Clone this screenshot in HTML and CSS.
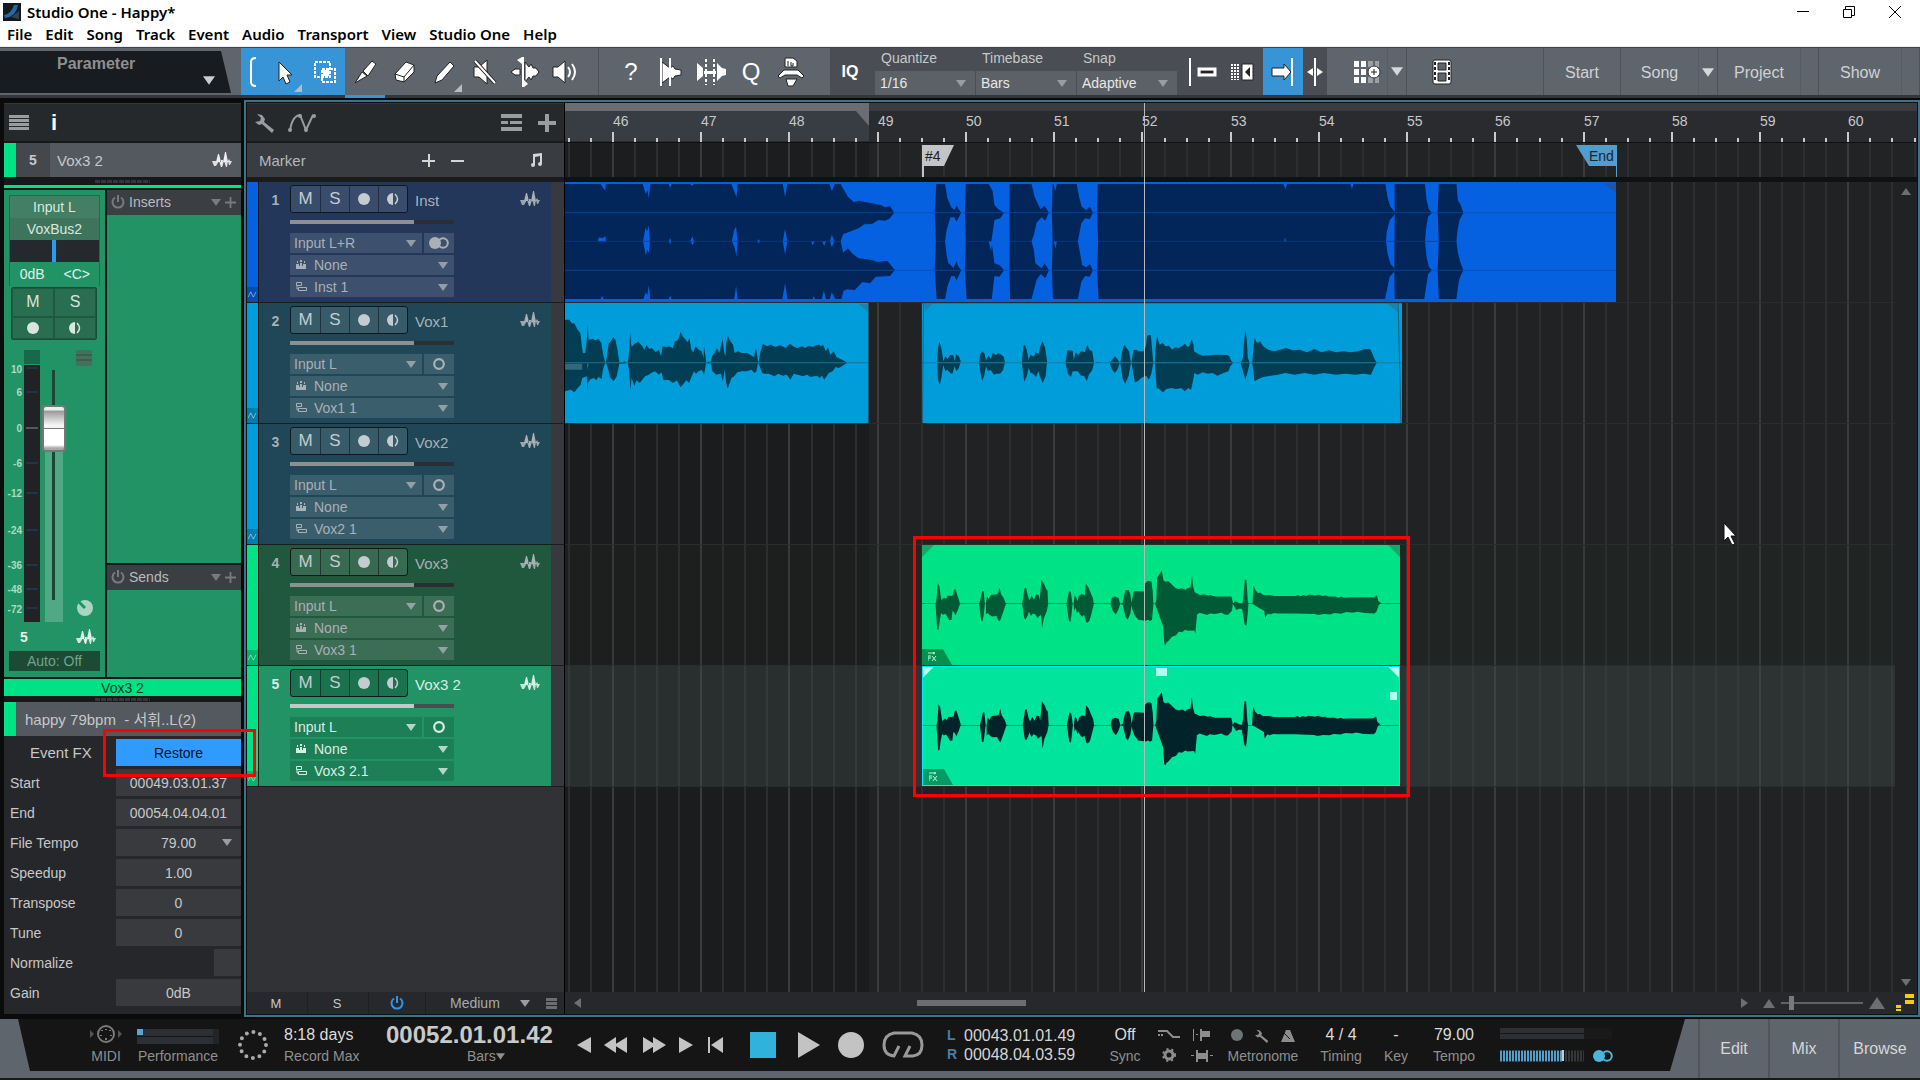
FILE: index.html
```html
<!DOCTYPE html>
<html lang="en">
<head>
  <meta charset="UTF-8" />
  <meta name="viewport" content="width=device-width, initial-scale=1.0" />
  <title>Studio One - Happy*</title>
  <link rel="stylesheet" href="styles.css">
</head>
<body>

  <!-- shared icons -->
  <svg class="sprite" width="0" height="0">
    <symbol id="i-wave" viewBox="0 0 20 16"><path d="M0 9h4l3 1h6l4-1h3l-2 4h-1l-1-4-1 6h-1l-2-6-2 6H9L7 9l-3 5H2z" fill="currentColor" opacity=".9"/><path d="M4 10l2-8h1l2 8zM11 10l2-10h1l2 10zM8 8l1 7h1l1-7zM16 9l1-2 1 2z" fill="currentColor"/></symbol>
    <symbol id="i-down" viewBox="0 0 10 7"><path d="M0 0h10L5 7z" fill="currentColor"/></symbol>
    <symbol id="i-rec" viewBox="0 0 12 12"><circle cx="6" cy="6" r="6" fill="currentColor"/></symbol>
    <symbol id="i-mon" viewBox="0 0 12 12"><path d="M6 0v12A6 6 0 0 1 6 0z" fill="currentColor"/><path d="M8 1q5 5 0 10" fill="none" stroke="currentColor" stroke-width="1.5"/></symbol>
    <symbol id="i-mono" viewBox="0 0 20 12"><circle cx="10" cy="6" r="4.8" fill="none" stroke="currentColor" stroke-width="2.2"/></symbol>
    <symbol id="i-stereo" viewBox="0 0 20 12"><circle cx="6" cy="6" r="6" fill="currentColor"/><circle cx="14" cy="6" r="4.8" fill="none" stroke="currentColor" stroke-width="2"/></symbol>
    <symbol id="i-inst" viewBox="0 0 10 10"><path d="M0 4h3v5H0zM4 3h2v6H4zM7 4h3v5H7zM4 0h2v2H4zM1 1h1v2H1zM8 1h1v2H8zM3 6h1v3H3zM6 6h1v3H6z" fill="currentColor"/></symbol>
    <symbol id="i-layer" viewBox="0 0 11 10"><path d="M.5.5h5v3h-5zM2.500 5.500h8v3h-8z" fill="none" stroke="currentColor" stroke-width="1"/><path d="M1 4v3h2" fill="none" stroke="currentColor"/></symbol>
    <symbol id="i-auto" viewBox="0 0 10 8"><path d="M0 7l3-6 3 6 3-6" fill="none" stroke="currentColor"/></symbol>
    <symbol id="i-power" viewBox="0 0 14 14"><path d="M4 2.500a5.500 5.500 0 1 0 6 0M7 0v7" fill="none" stroke="currentColor" stroke-width="2"/></symbol>
    <symbol id="i-plus" viewBox="0 0 12 12"><path d="M5 0h2v5h5v2H7v5H5V7H0V5h5z" fill="currentColor"/></symbol>
    <symbol id="i-wrench" viewBox="0 0 20 20"><path d="M2 1l5 1 3 4-1 3 10 8-2 3L7 11l-3 1-4-3 5-1 1-3z" fill="currentColor"/></symbol>
    <symbol id="i-lines" viewBox="0 0 20 15"><path d="M0 0h20v3H0zM0 4h20v3H0zM0 8h20v3H0zM0 12h20v3H0z" fill="currentColor"/></symbol>
    <symbol id="i-fx" viewBox="0 0 9 10"><path d="M0 1h6M5 0l2 1-2 1M0 4h3M0 4v5M0 6h3M4 4l4 5M8 4L4 9" fill="none" stroke="currentColor" stroke-width="1"/></symbol>
    <symbol id="vox3" viewBox="65 78 1413 358" preserveAspectRatio="none">
      <path fill="currentColor" d="M105 254l3-15 3-47 5 8 6 42 8-7 6 3 5-9 9 1 6-2 3-16 5-3 6 20 5 15 2 10-6 18-7 16-5-10-4-3-3 27h-7l-8-15-4-4-6 3-5-5-4 18-4 31-4 1-3-45z
        M234 254l5-20 4-19h4l4 39-4 35-3 17-4-1-4-33zM254 254l3-23 5 7 7-11 17-2 4-3 4-17 5 20 8 12 6 17-8 24-10 28-5-4-5-12-13 1-7-4-6-6-5 4z
        M361 254l4-26 3-21 5-1 5 25 5 12 6-14 7 12 6-15 8 1 3 14 5-59 8 12 6 15 4 5 2 40-4 21-9 22-5 29-3-39-5 3-6 6-5-10-8-4-6 8-6-13-4 12-6 12-4-5z
        M492 254l5-25 3-14 5 4 5 35-3 30-3 24-5-4-4-30zM513 254l3-25 4 4 5 13 3-15 8-6 11 2 2-34 8 12 7 17 6 14 3 18-8 32-5 18-6 6-4-2-6-22-5 5-6-4-6-11-4 5-4-16-4 9z
        M622 254l4-18 10-4 10 4 5 18-6 18-7 13-9-10zM652 254l6-3 4-22 5-16 9-1 5 13 4 29-4 28-8 19-6-8-5-21-3-15zM684 254l6-35 4-4 28 2 3-26 5-4 4-2 9 2 4 30 2 37-4 47-6 4-6-4-7 3-22-3-10-13-7-17z
        M754 254l4-14 2-65 10-15 4-5 5 29 6 4 8-2 10 9 12 12 9 2 11-2 9 5 5-5 10-3 4-35 4 34 4 16 16 8 12-2 12 4 5-2 16 5h48l4 18 0 4-3 20-11 12-8 0-12-6-20 4-14-2-8 5-22-7-8 5-5 58-3-10-20 1-7-3-9 7-10-1-8 10-12 5-10 12-6 5-4 8-3-5-3-50z
        M984 254l6-8 6 2 6 4 10 2 3-20 4-52h5l4 60 2 12-2 28-4 38-5-5-5-31-3-16-9 0-8 4z
        M1042 254l3-57 6 16 8 9 5-2 10 7 20 0 12 3 63 0 8-3 6 4 10-4 7 3 10-4 18 3 10-3 10 4 12-1 5 3h22l8 3 10-3 7 3 20-1h68l10-6 4 17 8 7-7 6-6 18-6 6-30-1-22-4-12 3-20-2-15 5-20-2-12 4-20-1-16 3-10-3-60-2h-50l-10-1-12 4-6-3-9 13-2-20z"/>
    </symbol>
  </svg>

  <header class="titlebar">
    <svg width="18" height="18"><rect width="18" height="18" fill="#151a20"/><path d="M1 12q7-1 10-10h4q-2 12-13 13z" fill="#1f6ba8"/><path d="M8 14l8-6v8z" fill="#37424d"/></svg>
    <span class="title">Studio One - Happy*</span>
    <button aria-label="Minimize"><svg width="12" height="12"><path d="M0 5.500h12" stroke="#000"/></svg></button>
    <button aria-label="Restore"><svg width="12" height="12"><path d="M.5 3.500h8v8h-8zM2.500 3.500v-3h9v9h-3" fill="none" stroke="#000"/></svg></button>
    <button aria-label="Close"><svg width="12" height="12"><path d="M0 0l12 12M12 0L0 12" stroke="#000"/></svg></button>
  </header>

  <nav class="menubar">
    <a href="#">File</a><a href="#">Edit</a><a href="#">Song</a><a href="#">Track</a><a href="#">Event</a><a href="#">Audio</a><a href="#">Transport</a><a href="#">View</a><a href="#">Studio One</a><a href="#">Help</a>
  </nav>

  <div class="toolbar">
    <div class="parameter"><span>Parameter</span><svg width="12" height="9"><use href="#i-down"/></svg></div>

    <div class="tools">
      <button class="active narrow" aria-label="Tool bracket"><svg width="10" height="30" fill="none" stroke="#fff" stroke-width="2"><path d="M8 1Q3 1 3 5v20q0 4 5 4"/></svg></button>
      <button class="active" aria-label="Arrow tool"><svg width="40" height="48"><path d="M14 14v19l4-4 3 7 4-2-3-7h5z" fill="#fff" stroke="#222" stroke-width="1"/><path d="M37 36v8h-8z" fill="#b5bcc4"/></svg></button>
      <button class="active" aria-label="Range tool"><svg width="24" height="24" fill="none" stroke="#fff" stroke-width="2"><path d="M2 2h15v15H2zM9 9h13v13H9z" stroke-dasharray="3 1"/><path d="M11 11h4v4h-4z" fill="#fff"/></svg></button>
      <button class="marked" aria-label="Split tool"><svg width="24" height="26"><path d="M2 24L9 13l5 4zM10 12L19 2l4 3-8 12z" fill="#fff" stroke="#222"/></svg></button>
      <button aria-label="Eraser tool"><svg width="24" height="24"><path d="M2 14L13 2l8 3v7L11 22l-8-2z" fill="#fff" stroke="#222"/><path d="M2 14l9 3 10-12M11 17v5" stroke="#222" fill="none"/></svg></button>
      <button aria-label="Paint tool"><svg width="40" height="48"><path d="M10 35l2-7 13-14 4 4-12 14z" fill="#fff" stroke="#222"/><path d="M37 36v8h-8z" fill="#b5bcc4"/></svg></button>
      <button aria-label="Mute tool"><svg width="26" height="26"><path d="M2 8h5l8-7v24l-8-7H2z" fill="#fff" stroke="#222"/><path d="M3 2l20 22" stroke="#222" stroke-width="4"/><path d="M3 2l20 22" stroke="#fff" stroke-width="2"/></svg></button>
      <button aria-label="Bend tool"><svg width="30" height="30"><path d="M1 15l4-3 5 0v6l-5 0zM15 5l4 5 2-3 2 4 3 0 3 4-3 4-3 0-2 4-2-3-4 5z" fill="#fff" stroke="#222" stroke-width="1"/><path d="M13 0v30" stroke="#fff" stroke-width="2"/><path d="M12 0v7L7 3zM14 30v-7l4 4z" fill="#fff"/></svg></button>
      <button aria-label="Listen tool"><svg width="26" height="26"><path d="M1 8h5l7-6v22l-7-6H1z" fill="#fff" stroke="#222"/><path d="M16 8q4 5 0 10M20 5q6 8 0 16" fill="none" stroke="#fff" stroke-width="2"/></svg></button>
    </div>

    <div class="tools actions">
      <button class="glyph" aria-label="Help">?</button>
      <button aria-label="Strip silence"><svg width="24" height="28"><path d="M3 4l8 6 3-2 2 3 6 1v5l-6 1-2 3-3-2-8 6z" fill="#fff" stroke="#222"/><path d="M2 0v28M11 0v28" stroke="#fff" stroke-width="2"/></svg></button>
      <button aria-label="Bend marker"><svg width="30" height="26"><path d="M1 4l6 5v8l-6 5zM8 12h12v3H8zM21 4l5 5 4 1v6l-4 1-5 5z" fill="#fff"/><path d="M10 0v26M18 0v26" stroke="#fff" stroke-width="2" stroke-dasharray="3 2"/></svg></button>
      <button class="glyph" aria-label="Quantize now">Q</button>
      <button aria-label="Macro"><svg width="28" height="30" fill="#fff" stroke="#222"><path d="M8 1h8l4 3v6H8zM1 19l6-6h14l6 6-2 2-5-3H8l-5 3zM9 22h11l-4 7h-5z"/><path d="M11 4v5M14 5v4h2V6" fill="none"/></svg></button>
    </div>

    <div class="snapbar">
      <button class="iq">IQ</button>
      <div class="field"><label for="quantize">Quantize</label><div class="select"><select id="quantize"><option>1/16</option></select><svg width="10" height="7"><use href="#i-down"/></svg></div></div>
      <div class="field"><label for="timebase">Timebase</label><div class="select"><select id="timebase"><option>Bars</option></select><svg width="10" height="7"><use href="#i-down"/></svg></div></div>
      <div class="field"><label for="snap">Snap</label><div class="select"><select id="snap"><option>Adaptive</option></select><svg width="10" height="7"><use href="#i-down"/></svg></div></div>
      <button class="first" aria-label="Snap to cursor"><svg width="30" height="30"><path d="M2 1v28" stroke="#fff" stroke-width="2"/><path d="M11 12h16v6H11z" fill="none" stroke="#fff" stroke-width="3"/><path d="M13 14h12v2H13z" fill="#222"/></svg></button>
      <button aria-label="Snap to grid"><svg width="24" height="18"><path d="M1 1v16M4 1v16M7 1v16" stroke="#fff" stroke-width="2" stroke-dasharray="2 1"/><path d="M11 1h11v16H11z" fill="#fff" stroke="#222"/><path d="M19 4v10l-5-5z" fill="#222"/></svg></button>
      <button class="active" aria-label="Autoscroll"><svg width="24" height="30"><path d="M1 11h12V7l7 8-7 8v-4H1z" fill="#fff" stroke="#222"/><path d="M21 1v28" stroke="#fff" stroke-width="2"/></svg></button>
      <button class="narrow" aria-label="Cursor follows edit"><svg width="16" height="30"><path d="M8 1v28" stroke="#fff" stroke-width="2"/><path d="M6 11v8l-6-4zM10 11v8l6-4z" fill="#fff"/></svg></button>
    </div>

    <button class="grid-btn" aria-label="Pad grid"><svg width="28" height="24"><path d="M1 1h5v6H1zM8 1h5v6H8zM1 9h5v6H1zM8 9h5v6H8zM1 17h5v6H1zM8 17h5v6H8z" fill="#fff"/><path d="M15 1h5v6h-5zM22 1h4v6h-4zM15 9h5v6h-5zM15 17h5v6h-5zM22 17h4v6h-4z" fill="#9aa0a6"/><circle cx="21" cy="12" r="6" fill="#fff" stroke="#333"/><path d="M18 12h6M21 9v6" stroke="#222"/></svg></button>
    <button class="drop" aria-label="Pad grid options"><svg width="12" height="9"><use href="#i-down"/></svg></button>
    <button class="film" aria-label="Video"><svg width="20" height="26"><rect x="1" y="1" width="18" height="24" rx="2" fill="#fff" stroke="#222"/><path d="M6 4h8v7H6zM6 14h8v8H6z" fill="#5f656d" stroke="#222"/><path d="M3 3v20M17 3v20" stroke="#222" stroke-width="2" stroke-dasharray="3 2"/></svg></button>
    <div class="pages">
      <button>Start</button><button>Song</button><button class="drop" aria-label="Song list"><svg width="12" height="9"><use href="#i-down"/></svg></button><button>Project</button><i></i><button>Show</button><i></i>
    </div>
  </div>

  <div class="workspace">
    <aside class="inspector">
      <div class="panel-head">
        <button aria-label="Options"><svg width="20" height="15"><use href="#i-lines"/></svg></button>
        <button class="info" aria-label="Info">i</button>
      </div>
      <div class="track-title"><b>5</b><span>Vox3 2</span><svg width="20" height="16"><use href="#i-wave"/></svg></div>
      <div class="grip"><i></i></div>

      <div class="mixer">
        <div class="channel">
          <div class="routing">
            <button>Input L</button>
            <button>VoxBus2</button>
            <div class="pan"></div>
            <div class="values"><span>0dB</span><span>&lt;C&gt;</span></div>
          </div>
          <div class="channel-buttons">
            <button>M</button><button>S</button>
            <button aria-label="Record"><svg width="12" height="12"><use href="#i-rec"/></svg></button>
            <button aria-label="Monitor"><svg width="12" height="12"><use href="#i-mon"/></svg></button>
          </div>
          <div class="fader-area">
            <svg class="scale" width="36" height="272">
              <rect x="20" y="0" width="16" height="14" fill="#17694a"/>
              <rect x="20" y="15" width="16" height="257" fill="#202225"/>
              <path d="M22 18h12M22 42h12M22 113h12M22 143h12M22 180h12M22 215h12M22 239h12M22 258h12" stroke="#1f4a6b"/>
              <path d="M22 78h12" stroke="#8a8f92"/>
              <g font-size="10" font-weight="bold" fill="#a9dcc4" text-anchor="end">
                <text x="18" y="23">10</text><text x="18" y="46">6</text><text x="18" y="82">0</text><text x="18" y="117">-6</text><text x="18" y="147">-12</text><text x="18" y="184">-24</text><text x="18" y="219">-36</text><text x="18" y="243">-48</text><text x="18" y="263">-72</text>
              </g>
            </svg>
            <input class="fader" type="range" min="0" max="100" value="81" aria-label="Volume">
            <div class="fader-side">
              <svg width="16" height="16"><rect width="16" height="16" rx="2" fill="#45705c"/><path d="M0 5h16M0 10h16" stroke="#2c4e3f"/></svg>
              <svg width="18" height="18"><circle cx="9" cy="9" r="8" fill="#a9d6c2"/><path d="M9 9L3 3" stroke="#229364" stroke-width="3"/></svg>
            </div>
          </div>
          <div class="channel-id"><b>5</b><svg width="20" height="16"><use href="#i-wave"/></svg></div>
          <button class="auto">Auto: Off</button>
        </div>
        <div class="racks">
          <div class="rack-head"><svg width="14" height="14"><use href="#i-power"/></svg><span>Inserts</span><svg width="10" height="7"><use href="#i-down"/></svg><svg width="11" height="11"><use href="#i-plus"/></svg></div>
          <div class="rack inserts"></div>
          <div class="rack-head"><svg width="14" height="14"><use href="#i-power"/></svg><span>Sends</span><svg width="10" height="7"><use href="#i-down"/></svg><svg width="11" height="11"><use href="#i-plus"/></svg></div>
          <div class="rack sends"></div>
        </div>
      </div>
      <div class="channel-name">Vox3 2</div>
      <div class="grip small"><i></i></div>

      <div class="event-title">happy 79bpm &nbsp;- 서휘..L(2)</div>
      <form class="event-form">
        <div class="row fx"><span>Event FX</span><button type="button" class="restore">Restore</button><div class="highlight"></div></div>
        <div class="row"><label for="ev-start">Start</label><input id="ev-start" value="00049.03.01.37"></div>
        <div class="row"><label for="ev-end">End</label><input id="ev-end" value="00054.04.04.01"></div>
        <div class="row"><label for="ev-tempo">File Tempo</label><div class="select tempo"><select id="ev-tempo"><option>79.00</option></select><svg width="10" height="7"><use href="#i-down"/></svg></div></div>
        <div class="row"><label for="ev-speed">Speedup</label><input id="ev-speed" value="1.00"></div>
        <div class="row"><label for="ev-trans">Transpose</label><input id="ev-trans" value="0"></div>
        <div class="row"><label for="ev-tune">Tune</label><input id="ev-tune" value="0"></div>
        <div class="row norm"><label for="ev-norm">Normalize</label><input type="checkbox" id="ev-norm"></div>
        <div class="row"><label for="ev-gain">Gain</label><input id="ev-gain" value="0dB"></div>
      </form>
    </aside>

    <main class="arrange">
      <section class="track-column">
        <div class="panel-head">
          <button aria-label="Settings"><svg width="20" height="20"><use href="#i-wrench"/></svg></button>
          <button aria-label="Automation"><svg width="30" height="20" fill="none" stroke="currentColor" stroke-width="2"><path d="M3 18Q5 3 13 2l6 15 7-15"/><g fill="currentColor" stroke="none"><circle cx="3" cy="17" r="2"/><circle cx="13" cy="3" r="2"/><circle cx="19" cy="17" r="2"/><circle cx="27" cy="3" r="2"/></g></svg></button>
          <span class="grow"></span>
          <button aria-label="Global tracks"><svg width="22" height="17"><path d="M0 0h21v4H0zM0 7h7v3H0zM9 7h12v3H9zM0 13h21v4H0z" fill="currentColor"/></svg></button>
          <button aria-label="Add track"><svg width="18" height="18"><path d="M7 0h4v7h7v4h-7v7H7v-7H0V7h7z" fill="currentColor"/></svg></button>
        </div>
        <div class="marker-head">
          <span>Marker</span>
          <button aria-label="Add marker"><svg width="13" height="13"><path d="M6 0h2v6h5v2H8v5H6V8H0V6h6z" fill="currentColor"/></svg></button>
          <button aria-label="Remove marker"><svg width="13" height="13"><path d="M0 6h13v2H0z" fill="currentColor"/></svg></button>
          <svg class="note" width="14" height="14"><path d="M4 1l9-1v11a2 2 0 1 1-2-2V3L6 4v8a2 2 0 1 1-2-2z" fill="currentColor"/></svg>
        </div>
        <div class="track-list" id="tracks"></div>
        <div class="list-foot">
          <button>M</button><button>S</button><button class="on" aria-label="Power"><svg width="14" height="14"><use href="#i-power"/></svg></button>
          <div class="select"><select aria-label="Track height"><option>Medium</option></select><svg width="10" height="7"><use href="#i-down"/></svg></div>
          <svg class="menu" width="11" height="11"><path d="M0 0h11v3H0zM0 4h11v3H0zM0 8h11v3H0z" fill="currentColor"/></svg>
        </div>
      </section>

      <section class="timeline">
        <svg class="ruler" id="ruler"></svg>
        <div class="markers">
          <svg class="grid" id="marker-grid"></svg>
          <svg class="flag cue" width="32" height="34"><path d="M0 2h32L22 23H2v11H0z" fill="#c3c4c6"/><text x="3" y="18" font-size="14" fill="#222">#4</text></svg>
          <svg class="flag end" width="41" height="34"><path d="M0 2h41v32h-1V23H13z" fill="#529dca"/><text x="13" y="18" font-size="14" fill="#14273a">End</text></svg>
        </div>
        <div class="lanes-wrap">
          <div class="lanes">
            <svg class="grid" id="lane-grid"></svg>
            <div class="lane">
              <svg class="clip inst" viewBox="13 36 2746 360" preserveAspectRatio="none">
                <path fill="#02265a" d="M13 42H733L745 66 752 80 768 97 780 92 800 97 838 105 850 112 862 108 873 128 862 145 850 152 832 150 815 162 795 163 780 175 750 188 740 192 733 214 740 248 752 235 765 252 780 265 815 270 830 276 855 272 875 300 862 318 825 320 810 340 790 336 770 360 750 358 741 362 735 387H13z
                  M983 42H1006L1012 85 1022 112 1031 120 1036 106 1040 115 1048 128 1036 155 1030 142 1020 142 1010 180 1006 214 1010 255 1014 278 1028 293 1036 272 1040 288 1048 301 1036 332 1030 318 1022 318 1012 350 1006 387H984L979 301 982 214 979 128z
                  M1060 42H1120L1130 62 1135 105 1145 118 1160 128 1150 145 1135 150 1127 214 1131 245 1135 280 1148 285 1160 301 1148 320 1135 318 1128 387H1062L1058 301 1060 214 1058 128z
                  M1175 42H1232L1240 80 1255 118 1266 107 1277 128 1268 152 1258 142 1245 158 1238 195 1232 214 1238 240 1242 280 1258 295 1266 280 1277 301 1268 325 1256 312 1245 330 1232 387H1176L1174 301 1175 214 1174 128z
                  M1287 42H1350L1356 80 1363 110 1375 120 1384 110 1392 128 1384 148 1372 145 1362 160 1353 214 1358 245 1364 285 1375 292 1384 282 1392 301 1384 320 1372 318 1362 335 1353 387H1288L1285 301 1287 214 1285 128z
                  M1405 42H2157L2163 85 2170 110 2179 122 2180 42H2260L2264 90 2270 118 2278 128 2268 140 2263 175 2260 214 2264 260 2270 290 2278 301 2268 312 2263 350 2258 387H2181L2179 307 2168 320 2160 365 2156 387H1407L1403 301 1406 214 1403 128z
                  M2296 42H2342L2346 92 2352 102 2360 128 2350 150 2345 180 2342 214 2346 250 2352 275 2360 301 2352 320 2348 335 2342 387H2296L2293 301 2296 214 2293 128z"/>
                <path fill="#0561e0" d="M2179 122L2181 128 2179 136 2168 150 2160 185 2158 214 2162 250 2170 283 2179 293V307L2168 320 2160 365 2156 387H2179L2181 128 2180 42H2157L2163 85 2170 110z
                  M106 42h14l-2 20-5-8zM216 42h20l-4 44-3-25-5 10zM284 42h8l-4 12zM340 42h10l-5 6zM448 42h16l-3 40-7-22zM582 42h12l-6 40zM704 42h14l-8 22z
                  M98 214l4-12 8 3 9-6 1 16zM217 214l6-40 5 10 4-18 3 48-3 36-4-12-4 18zM284 214l4-10 3 10-3 8zM340 214l6-15 4 15-3 12zM449 214l6-34 5-10 4 44-3 46-5-28zM515 214l4-6 4 6-4 6zM582 214l6-38 6 38-6 40zM656 214h9l-5 12zM685 214h10l-5 14zM705 214l5-20 7 20-7 18z
                  M106 387l4-9 4 9zM218 387l6-20 4 8 4-30 4 42zM284 387l4-10 3 10zM455 387l5-40 4 40zM581 387l7-48 6 48zM660 387l3-10 3 10zM684 387l5-25 6 25zM705 387l5-20 9 20z
                  M1120 214h10l-4 30zM1290 42h8l-4 22zM1290 214h8l-3 22zM1890 42h10l-5 16zM2065 42h8l-4 16zM1892 214l2-12 3 12z"/>
                <path d="M13 128H2759M13 301H2759" stroke="#0c4ba8" stroke-width="2" fill="none"/>
                <path d="M13 214H733M983 214H1006M1060 214H1127M1175 214H1232M1287 214H1353M1406 214H2342" stroke="#123c86" stroke-width="2"/>
                <path d="M2725 40h34v28z" fill="#1d55ac"/>
              </svg>
            </div>
            <div class="lane">
              <svg class="clip vox1a" viewBox="13 400 794 360" preserveAspectRatio="none">
                <path fill="#013e54" d="M13 450L25 450 30 460 38 462 46 480 53 490 57 530 60 550 66 550 70 510 72 465 75 510 85 508 92 512 100 508 108 520 112 550 118 579 112 600 109 628 100 622 95 632 88 625 80 628 73 640 72 668 70 620 58 625 54 645 46 655 38 668 28 660 13 665z
                  M120 579L127 522 133 515 139 502 145 512 150 540 155 577 162 579 168 575 174 579 166 582 155 582 148 620 140 635 130 622 126 600z
                  M177 579L181 540 183 490 187 532 195 522 205 516 215 530 220 540 226 526 233 538 240 535 250 548 258 540 264 560 268 530 278 532 285 530 295 535 300 515 308 512 315 487 320 500 328 510 333 518 338 505 343 540 348 548 354 530 362 540 370 545 375 565 376 530 380 560 382 579 376 615 370 600 362 605 355 612 350 605 342 625 337 640 330 632 315 653 305 632 295 640 283 630 270 632 265 608 258 615 248 605 238 610 232 615 222 620 215 630 208 640 200 632 194 648 187 625 184 660 181 610z
                  M384 579l4-4 4 4-4 4zM393 579L397 560 405 548 410 535 416 550 420 530 425 507 428 545 432 560 434 520 438 498 445 515 452 525 456 550 465 545 475 550 490 550 500 558 507 562 511 535 514 545 517 579 513 605 508 610 500 600 488 605 475 605 463 608 455 620 448 625 443 640 438 658 434 640 430 600 425 635 420 612 408 615 398 605z
                  M518 579L524 545 530 522 540 530 550 525 562 532 575 527 590 535 600 522 612 532 620 535 632 530 640 535 650 528 660 532 668 527 677 525 682 530 687 525 694 545 700 533 706 555 715 545 722 562 732 568 742 573 750 579 738 588 728 595 720 592 712 605 702 610 690 630 684 618 678 625 670 618 655 622 645 615 635 620 620 615 610 612 602 630 592 615 582 618 570 612 560 620 545 612 535 612 528 610z"/>
                <path d="M13 579H805" stroke="#1d7288" stroke-width="3"/>
                <path d="M13 582H58V600H13zM70 582h5l-3 18z" fill="#32687a"/>
                <path d="M780 402h27v27z" fill="#1584b4"/>
                <path d="M806 400V760" stroke="#27536a" stroke-width="3"/>
              </svg>
              <svg class="clip vox1b" viewBox="46 400 990 360" preserveAspectRatio="none">
                <path fill="#013e54" d="M77 579L79 535 82 516 86 535 90 575 94 560 99 568 104 556 110 556 114 575 116 553 122 560 126 575 122 595 117 605 113 590 109 612 104 610 98 600 94 605 90 585 86 625 83 645 79 630z
                  M163 579L166 555 170 545 175 552 178 572 183 558 188 568 192 549 198 556 204 550 210 556 215 562 217 579 213 602 207 612 200 612 194 615 187 600 182 605 178 590 174 620 170 633 166 605z
                  M252 579L255 530 258 525 262 540 266 570 270 555 277 562 280 548 287 552 290 530 295 515 300 535 304 575 301 620 295 640 289 620 286 605 281 622 275 612 270 610 266 595 262 620 257 637 254 605z
                  M342 579L346 542 352 542 357 545 359 572 363 548 368 556 374 545 382 547 387 525 391 540 397 545 401 579 397 602 390 615 386 635 380 618 374 618 367 605 361 605 357 605 353 622 347 612z
                  M405 577h8v3h-8zM433 579L438 570 444 560 450 570 454 580 449 600 444 610 438 600zM455 579L459 545 463 525 468 535 473 545 477 579 472 620 465 642 460 628zM478 579L482 542 487 540 493 545 503 545 508 530 510 498 518 495 521 545 523 579 519 612 514 630 508 618 498 625 491 635 485 638 481 605z
                  M526 579L528 530 531 500 536 525 542 520 548 530 555 528 562 540 568 532 575 535 582 530 588 522 594 532 598 528 602 508 606 525 607 545 615 552 625 558 650 555 675 556 680 560 683 572 688 579 682 590 678 605 668 610 655 618 645 610 635 612 625 608 615 615 608 610 604 640 601 660 595 655 588 665 580 655 570 658 560 655 550 658 543 668 535 658 530 655z
                  M703 579L708 565 710 520 713 480 716 510 718 565 722 579 718 605 713 630 708 605z
                  M727 579L730 530 732 505 737 520 743 515 750 530 760 540 772 545 785 540 797 535 810 542 825 540 840 548 855 538 870 548 885 542 900 548 915 545 930 548 945 545 960 538 970 538 975 552 980 570 984 579 978 595 972 615 955 612 940 615 920 612 900 615 875 610 855 615 835 610 815 615 795 610 780 615 765 618 750 622 740 628 732 635z"/>
                <path d="M46 579H1036" stroke="#1d7e9c" stroke-width="3"/>
                <path d="M50 402h17L52 428zM1006 402h20l2 26z" fill="#1584b4"/>
                <path d="M46 400H1036M1028 400l6 360M49 400l-2 360" stroke="#27536a" stroke-width="2" fill="none"/>
              </svg>
            </div>
            <div class="lane"></div>
            <div class="lane green">
              <div class="clip vox3"><svg class="wave"><use href="#vox3"/></svg>
                <svg class="fx-tag" width="30" height="16"><path d="M0 0h21l9 16H0z" fill="#04904f"/><use href="#i-fx" x="6" y="3" width="9" height="10"/></svg></div>
            </div>
            <div class="lane selected">
              <div class="clip vox3 picked"><svg class="wave"><use href="#vox3"/></svg>
                <svg class="fx-tag" width="30" height="16"><path d="M0 0h21l9 16H0z" fill="#069a66"/><use href="#i-fx" x="6" y="3" width="9" height="10"/></svg>
                <i class="handle top"></i><i class="handle side"></i></div>
            </div>
            <div class="highlight"></div>
          </div>
          <div class="vscroll"><svg width="10" height="7"><path d="M0 7h10L5 0z" fill="currentColor"/></svg><svg width="10" height="7"><use href="#i-down"/></svg></div>
        </div>
        <div class="hscroll">
          <svg width="7" height="10"><path d="M7 0v10L0 5z" fill="currentColor"/></svg>
          <div class="thumb"></div>
          <span class="grow"></span>
          <svg width="7" height="10"><path d="M0 0v10l7-5z" fill="currentColor"/></svg>
          <svg class="zoom-out" width="12" height="9"><path d="M0 9h12L6 0z" fill="currentColor"/></svg>
          <input type="range" class="zoom" min="0" max="100" value="10" aria-label="Zoom">
          <svg width="16" height="12"><path d="M0 12h16L8 0z" fill="currentColor"/></svg>
          <svg width="18" height="18" fill="#f5d000"><path d="M9 0h9v4H9zM9 6h9v4H9zM0 11h5v3H0zM0 15h5v2H0z"/></svg>
        </div>
        <div class="playhead"></div>
        <svg class="pointer" width="14" height="24"><path d="M1 1v18l4-4 4 8 3-1-4-8h5z" fill="#fff" stroke="#111"/></svg>
      </section>
    </main>
  </div>

  <footer class="transport">
    <div class="deck">
      <div class="cell"><svg width="34" height="18" fill="none" stroke="#77797b"><circle cx="17" cy="9" r="8" stroke-width="2"/><path d="M1 5l4 4-4 4zM29 5l4 4-4 4z" fill="#555" stroke="none"/><path d="M12 11v-1M13 6v-1M17 5v-1M21 6v-1M22 11v-1M17 15v-2" stroke-width="2"/></svg><small>MIDI</small></div>
      <div class="cell perf"><svg width="82" height="16"><path d="M0 0h82v7H0zM0 8h82v7H0z" fill="#2c3035"/><path d="M76 0h6v15h-6z" fill="#232427"/><path d="M0 0h6v6H0z" fill="#52a9d6"/></svg><small>Performance</small></div>
      <div class="cell"><svg width="30" height="30"><circle cx="15" cy="15" r="13" fill="none" stroke="#aaa" stroke-width="4" stroke-linecap="round" stroke-dasharray="0 6.810"/></svg></div>
      <div class="cell left"><span>8:18 days</span><small>Record Max</small></div>
      <div class="cell left clock"><strong>00052.01.01.42</strong><small>Bars<svg width="9" height="7"><use href="#i-down"/></svg></small></div>
      <button aria-label="Previous bar"><svg width="14" height="16"><path d="M14 0v16L0 8z"/></svg></button>
      <button aria-label="Rewind"><svg width="24" height="16"><path d="M12 0v16L0 8zM23 0v16L10 8z"/></svg></button>
      <button aria-label="Fast forward"><svg width="24" height="16"><path d="M0 0l13 8L0 16zM10 0l13 8-13 8z"/></svg></button>
      <button aria-label="Next bar"><svg width="14" height="16"><path d="M0 0l14 8-14 8z"/></svg></button>
      <button aria-label="Return to zero"><svg width="16" height="16"><path d="M0 0h2v16H0zM15 0v16L3 8z"/></svg></button>
      <button aria-label="Stop"><svg width="26" height="26"><path d="M0 0h26v26H0z" fill="#2fb3dc"/></svg></button>
      <button aria-label="Play"><svg width="22" height="26"><path d="M0 0l22 13L0 26z"/></svg></button>
      <button aria-label="Record"><svg width="26" height="26"><circle cx="13" cy="13" r="13"/></svg></button>
      <button aria-label="Loop"><svg width="42" height="28" fill="none" stroke="#999" stroke-width="3"><path d="M17 15l-5 10Q2 24 2 14T12 2h18q10 2 10 12t-9 11h-8l5-10"/></svg></button>
      <div class="locators"><b>L</b><span>00043.01.01.49</span><b>R</b><span>00048.04.03.59</span></div>
      <div class="cell"><span>Off</span><small>Sync</small></div>
      <div class="cell icons"><svg width="22" height="12" fill="none" stroke="#8d8d8d" stroke-width="2"><path d="M0 2h9l6 6h7"/><path d="M0 6h6" stroke-dasharray="2 1"/></svg><svg width="14" height="14"><circle cx="7" cy="7" r="4" fill="none" stroke="#8d8d8d" stroke-width="3"/><circle cx="7" cy="7" r="6" fill="none" stroke="#8d8d8d" stroke-width="2" stroke-dasharray="2 3"/></svg></div>
      <div class="cell icons"><svg width="20" height="12" fill="#8d8d8d"><path d="M1 0h1v12H1zM4 5h2v1H4zM8 0h2v12H8zM10 2h8v6h-8z"/></svg><svg width="22" height="12" fill="#8d8d8d"><path d="M5 0h2v12H5zM7 3h8v6H7zM15 0h2v12h-2zM0 5h3v1H0zM19 5h3v1h-3z"/></svg></div>
      <div class="cell"><div class="click"><svg width="12" height="12"><circle cx="6" cy="6" r="6" fill="#6d7475"/></svg><svg width="14" height="14"><use href="#i-wrench"/></svg><svg width="14" height="14"><path d="M5 1h4l5 12H0z" fill="#8d8d8d"/><path d="M2 3l7 7" stroke="#151515"/></svg></div><small>Metronome</small></div>
      <div class="cell"><span>4 / 4</span><small>Timing</small></div>
      <div class="cell"><span>-</span><small>Key</small></div>
      <div class="cell"><span>79.00</span><small>Tempo</small></div>
      <div class="meters">
        <svg width="114" height="12"><path d="M0 0h84v5H0zM0 6h84v5H0z" fill="#2c3035"/><path d="M84 0h28v11H84z" fill="#19191a"/></svg>
        <svg width="114" height="12"><path d="M0 6h62" stroke="#4f9fc9" stroke-width="11" stroke-dasharray="2 1"/><path d="M62 0h2v11h-2z" fill="#ccc"/><path d="M65 6h19" stroke="#34363b" stroke-width="11" stroke-dasharray="2 1"/><g color="#4fb4dc"><use href="#i-stereo" x="93" y="0" width="20" height="12"/></g></svg>
      </div>
    </div>
    <div class="views"><button>Edit</button><button>Mix</button><button>Browse</button></div>
  </footer>

  <script src="script.js"></script>
</body>
</html>
```
FILE: styles.css
```css
* {
  box-sizing: border-box;
}

body {
  margin: 0;
  height: 100vh;
  display: flex;
  flex-direction: column;
  overflow: hidden;
  background: #0b0b0c;
  color: #c6c8ca;
  font: 14px "Liberation Sans", "Noto Sans CJK KR", sans-serif;
}

button, select, input {
  font: inherit;
  color: inherit;
  background: none;
  border: 0;
  margin: 0;
  padding: 0;
  border-radius: 0;
}

button {
  display: flex;
  align-items: center;
  justify-content: center;
}

svg {
  display: block;
  flex: none;
}

.sprite {
  position: absolute;
}

.grow {
  flex: 1;
}

/* title and menu */
.titlebar {
  display: flex;
  align-items: center;
  height: 24px;
  padding: 0 2px 0 3px;
  background: #fff;
  color: #000;
  font: 600 15px "Noto Sans", sans-serif;
}

.title {
  flex: 1;
  padding-left: 6px;
}

.titlebar button {
  width: 46px;
}

.menubar {
  display: flex;
  gap: 13px;
  height: 23px;
  padding: 0 7px;
  background: #fff;
  border-bottom: 1px solid #eee;
  font: 600 15px/21px "Noto Sans", sans-serif;
}

.menubar a {
  color: #000;
  text-decoration: none;
}

/* toolbar */
.toolbar {
  display: flex;
  height: 51px;
  background: #5f656d;
  border-top: 1px solid #3f434a;
  border-bottom: 3px solid #33373c;
}

.parameter {
  display: flex;
  justify-content: space-between;
  width: 231px;
  height: 42px;
  margin: 3px 10px 0 0;
  padding: 4px 16px 8px 57px;
  background: #181b20;
  clip-path: polygon(0 0, 221px 0, 100% 100%, 0 100%);
  color: #8f8f8f;
  font-size: 16px;
  font-weight: bold;
}

.parameter svg {
  align-self: flex-end;
  color: #ccc;
}

.tools, .snapbar, .pages {
  display: flex;
}

.tools button, .snapbar > button {
  width: 40px;
  height: 47px;
}

.toolbar .active {
  background: #3794d7;
}

.tools .narrow, .snapbar .narrow {
  width: 24px;
}

.snapbar .first {
  margin-left: 5px;
}

.tools .marked {
  height: 50px;
  border-bottom: 3px solid #3794d7;
}

.actions {
  margin-left: 13px;
  padding: 0 19px 0 12px;
  border-left: 1px solid #4d5259;
}

.glyph {
  color: #fff;
  font-size: 24px;
}

.snapbar {
  background: #4a4d53;
}

.snapbar .iq {
  width: 45px;
  padding-right: 5px;
  color: #fff;
  font-size: 16px;
  font-weight: bold;
}

.field {
  width: 101px;
}

.field label {
  display: block;
  padding: 0 0 2px 6px;
  line-height: 21px;
}

.select {
  display: grid;
  align-items: center;
}

.select > * {
  grid-area: 1 / 1;
}

.select svg {
  justify-self: end;
  margin-right: 9px;
  color: #999da1;
  pointer-events: none;
}

select {
  appearance: none;
  width: 100%;
  height: 100%;
}

.field .select {
  height: 24px;
  background: #5c6067;
  border-right: 1px solid #4a4d53;
}

.field select {
  padding-left: 5px;
  color: #e8e8e8;
}

.grid-btn {
  width: 60px;
  padding-left: 20px;
}

.toolbar .drop {
  width: 20px;
  border-right: 1px solid #4d5259;
  border-left: 1px solid #565c63;
  color: #d5d7d9;
}

.film {
  width: 70px;
}

.pages {
  margin-left: auto;
  border-left: 1px solid #4d5259;
  color: #d0d2d4;
  font-size: 16px;
}

.pages button {
  width: 77px;
  padding-top: 2px;
}

.pages button:nth-child(4), .pages button:nth-child(6) {
  width: 82px;
}

.pages i {
  width: 19px;
  border-left: 1px solid #565c63;
  border-right: 1px solid #4d5259;
}

.pages button:first-child {
  border-right: 1px solid #4d5259;
}

/* workspace */
.workspace {
  display: flex;
  flex: 1;
  min-height: 0;
  padding: 2px 0;
}

.inspector {
  display: flex;
  flex-direction: column;
  width: 237px;
  margin: 3px 3px 3px 4px;
  background: #17181a;
}

.panel-head {
  display: flex;
  align-items: center;
  gap: 12px;
  height: 38px;
  margin-bottom: 2px;
  padding: 0 5px;
  background: #26292b;
  border-top: 1px solid #33373a;
  color: #9a9c9e;
}

.info {
  width: 26px;
  color: #fff;
  font-size: 22px;
  font-weight: bold;
}

.track-title {
  display: flex;
  align-items: center;
  height: 34px;
  padding-right: 9px;
  background: #54585f;
  border-left: 12px solid #00e286;
  font-size: 15px;
}

.track-title b {
  width: 34px;
  line-height: 34px;
  background: #44474c;
  text-align: center;
  font-size: 14px;
}

.track-title span {
  flex: 1;
  padding-left: 7px;
}

.track-title svg {
  color: #eee;
}

.grip {
  display: flex;
  justify-content: center;
  align-items: center;
  height: 11px;
  border-bottom: 3px solid #00e286;
}

.grip i {
  width: 55px;
  height: 3px;
  background: repeating-linear-gradient(90deg, #34363a 0 5px, #17181a 5px 6px);
}

.grip.small {
  height: 6px;
  border: 0;
}

.mixer {
  display: flex;
  flex: 1;
  gap: 2px;
  margin: 2px 0;
}

.channel {
  width: 101px;
  background: #229364;
  padding: 5px 5px 6px;
  display: flex;
  flex-direction: column;
}

.routing {
  border: 1px solid #1b6f4e;
  border-bottom: 0;
}

.routing button {
  width: 100%;
  height: 22px;
  background: #427f63;
  color: #d8e8e0;
}

.routing button + button {
  background: #3e745b;
}

.pan {
  height: 22px;
  background: linear-gradient(90deg, transparent 42px, #2b9bf0 42px 46px, transparent 46px) #25282d;
}

.values {
  display: flex;
  height: 24px;
  align-items: center;
  color: #e0f0e8;
}

.values span {
  flex: 1;
  text-align: center;
}

.channel-buttons {
  display: grid;
  grid-template-columns: 1fr 1fr;
  height: 53px;
  margin: 1px 3px 10px 2px;
  border: 1px solid #164f38;
  border-radius: 2px;
  color: #d7e6df;
  font-size: 16px;
}

.channel-buttons button {
  background: #2a6e52;
  outline: 1px solid #1d5a41;
  outline-offset: -1px;
}

.fader-area {
  display: flex;
  margin-left: -5px;
}

.fader {
  appearance: none;
  writing-mode: vertical-lr;
  direction: rtl;
  width: 24px;
  height: 257px;
  margin: 15px 0 0 2px;
  background:
    linear-gradient(#1c4635, #1c4635) 10px 5px / 3px 230px no-repeat,
    linear-gradient(#50a984, #50a984) 3px 80px / 18px 177px no-repeat;
}

.fader::-webkit-slider-thumb {
  appearance: none;
  width: 24px;
  height: 47px;
  border: 2px solid #777;
  border-radius: 4px;
  background: linear-gradient(#eee 0 3px, #999 4px, #f5f5f5 18px 21px, #777 21px 22px, #fff 22px 38px, #aaa 41px);
}

.fader-side {
  display: flex;
  flex-direction: column;
  justify-content: space-between;
  margin: 0 0 5px 10px;
}

.channel-id {
  display: flex;
  flex: 1;
  align-items: center;
  justify-content: space-between;
  padding: 0 4px 0 11px;
  color: #e4f2ec;
}

.auto {
  height: 20px;
  background: #1b4a35;
  color: #6fa58c;
}

.racks {
  display: flex;
  flex-direction: column;
  flex: 1;
}

.rack-head {
  display: flex;
  align-items: center;
  gap: 4px;
  height: 25px;
  padding: 0 5px 1px 4px;
  background: #3b3e43;
  color: #777a7e;
}

.rack-head span {
  flex: 1;
  color: #b9bbbd;
}

.rack {
  background: #229364;
}

.inserts {
  flex: 1;
  margin-bottom: 2px;
}

.sends {
  height: 87px;
}

.channel-name {
  height: 17px;
  background: #00e286;
  color: #0a3d28;
  line-height: 18px;
  text-align: center;
}

.event-title {
  height: 34px;
  padding-left: 9px;
  background: #54585f;
  border-left: 12px solid #00e286;
  font-size: 15px;
  line-height: 36px;
  white-space: nowrap;
}

.event-form {
  display: grid;
  gap: 3px;
  padding: 3px 0 8px;
  background: #26272a;
}

.row {
  display: grid;
  grid-template-columns: 106px 1fr;
  height: 27px;
  padding-left: 6px;
  align-items: center;
}

.row input, .row .select {
  width: 100%;
  min-width: 0;
  height: 27px;
  background: #393a3d;
  text-align: center;
}

.row .tempo select {
  text-align: center;
  padding-right: 0;
}

.norm {
  grid-template-columns: 1fr 27px;
}

.norm input {
  appearance: none;
}

.fx {
  position: relative;
  font-size: 15px;
}

.fx span {
  padding-left: 20px;
}

.restore {
  height: 27px;
  background: #309bff;
  color: #06121f;
  font-size: 14px;
}

.highlight {
  position: absolute;
  z-index: 5;
  border: 3px solid #f00;
  pointer-events: none;
}

.fx .highlight {
  left: 99px;
  top: -10px;
  width: 153px;
  height: 48px;
}

/* arrange view */
.arrange {
  display: flex;
  flex: 1;
  min-width: 0;
  padding: 1px;
  border: 2px solid #3f7189;
  background: #101112;
}

.track-column {
  display: flex;
  flex-direction: column;
  width: 317px;
  background: #1a1b1c;
}

.track-column .panel-head {
  padding: 0 8px;
}

.track-column .panel-head button:last-child {
  margin-left: 3px;
}

.marker-head {
  display: flex;
  align-items: center;
  gap: 16px;
  height: 34px;
  margin-bottom: 5px;
  padding: 0 21px 0 12px;
  background: #393c41;
  color: #d5d5d5;
  font-size: 15px;
}

.marker-head span {
  width: 147px;
  color: #b5b7b9;
}

.marker-head .note {
  margin-left: auto;
}

.track-list {
  flex: 1;
  background: #303236;
}

.track {
  display: grid;
  grid-template-columns: 12px 31px 1fr 13px;
  height: 121px;
  border-bottom: 1px solid #1b1c1e;
  background: #38393e;
  color: #a9b0b6;
}

.track-color {
  display: flex;
  align-items: flex-end;
  background: #009ddb;
  border-right: 1px solid #17191b;
}

.track-color svg {
  width: 11px;
  height: 15px;
  padding: 4px 1px;
  background: #00000033;
  color: #ffffff88;
}

.track-no {
  padding: 10px 0 0 2px;
  text-align: center;
  font-weight: bold;
  background: #1f4757;
}

.track-body {
  padding-top: 3px;
  background: #1f4757;
}

.blue .track-color { background: #0561e0; }
.blue .track-no, .blue .track-body { background: #223759; }
.green .track-color, .selected .track-color { background: #00e286; }
.green .track-no, .green .track-body { background: #20583d; }
.selected .track-no, .selected .track-body { background: #229364; }
.track.selected { color: #d9eee4; }

.track-top {
  display: flex;
  align-items: center;
  height: 28px;
  padding-right: 11px;
}

.msr {
  display: grid;
  grid-template-columns: repeat(4, 1fr);
  width: 118px;
  height: 28px;
  border: 1px solid #10181f;
  border-radius: 3px;
  background: #ffffff1c;
  color: #c4cbd1;
  font-size: 17px;
}

.selected .msr {
  background: #00000038;
}

.msr button + button {
  border-left: 1px solid #10181f99;
}

.track-name {
  flex: 1;
  padding: 2px 0 0 7px;
  font-size: 15px;
}

.volume {
  display: block;
  appearance: none;
  width: 164px;
  height: 4px;
  margin: 7px 0 9px;
  background: linear-gradient(90deg, #8e8f90 124px, #2b2e33 124px);
}

.selected .volume {
  background: linear-gradient(90deg, #c6c8c7 124px, #4a4d4e 124px);
}

.volume::-webkit-slider-thumb {
  appearance: none;
  width: 1px;
  height: 4px;
}

.routes {
  display: grid;
  grid-template-columns: 132px 30px;
  gap: 2px;
  width: 164px;
}

.routes .select, .routes button {
  height: 20px;
  background: #ffffff20;
}

.selected .routes .select, .selected .routes button {
  background: #00000022;
}

.routes .wide {
  grid-column: 1 / 3;
}

.routes select {
  padding-left: 4px;
}

.routes .wide select {
  padding-left: 24px;
}

.routes .select svg {
  margin-right: 6px;
  color: inherit;
}

.routes .select .drop-mark {
  opacity: 0.8;
}

.routes .select .lead {
  justify-self: start;
  margin-left: 6px;
}

.list-foot {
  display: flex;
  align-items: center;
  height: 22px;
  background: #26282b;
  font-size: 13px;
}

.list-foot button {
  width: 61px;
  height: 22px;
  padding-right: 2px;
  border-right: 1px solid #1d1f21;
}

.list-foot .on {
  width: 57px;
  padding: 0;
  color: #2f95e8;
}

.list-foot .select {
  width: 113px;
  padding-left: 24px;
  color: #a8aaac;
  font-size: 14px;
}

.list-foot .menu {
  margin-left: 7px;
  color: #6c6e70;
}

/* timeline */
.timeline {
  position: relative;
  display: flex;
  flex: 1;
  min-width: 0;
  flex-direction: column;
  border-left: 1px solid #000;
  overflow: hidden;
}

.ruler {
  width: 100%;
  height: 39px;
  margin-bottom: 1px;
  background: linear-gradient(#3a3c41 8px, #2a2b2e 8px);
}

.markers {
  position: relative;
  height: 34px;
  margin-bottom: 5px;
  background: #212325;
}

.grid {
  position: absolute;
  width: 100%;
  height: 100%;
}

.flag {
  position: absolute;
  top: 0;
}

.cue { left: 357px; }
.end { left: 1011px; }

.lanes-wrap {
  display: flex;
  flex: 1;
  min-height: 0;
}

.lanes {
  position: relative;
  flex: 1;
  overflow: hidden;
  background: #202224;
}

.lane {
  position: relative;
  height: 121px;
  border-bottom: 1px solid #2a2c2e;
}

.lane.green {
  background: #24342024;
}

.lane.selected {
  background: #40504a60;
}

.clip {
  position: absolute;
  top: 0;
  height: 120px;
}

.inst {
  left: 0;
  width: 1051px;
  background: #0561e0;
}

.vox1a {
  left: 0;
  width: 304px;
  background: #009ddb;
}

.vox1b {
  left: 357px;
  width: 480px;
  background: #009ddb;
}

.vox3 {
  left: 357px;
  width: 478px;
  background:
    linear-gradient(225deg, #15a866 8px, transparent 9px),
    linear-gradient(135deg, #15a866 8px, transparent 9px),
    linear-gradient(#0a9a60, #0a9a60) 0 58px / 100% 1px no-repeat,
    #00e286;
  color: #015a36;
}

.vox3.picked {
  background:
    linear-gradient(225deg, #b8fff0 7px, transparent 8px),
    linear-gradient(135deg, #b8fff0 7px, transparent 8px),
    linear-gradient(#0a9a60, #0a9a60) 0 58px / 100% 1px no-repeat,
    #00e49c;
  border: 1px solid #00eaff;
  color: #012329;
}

.wave {
  width: 100%;
  height: 100%;
}

.fx-tag {
  position: absolute;
  left: 0;
  bottom: 0;
  color: #b5f5d5;
}

.handle {
  position: absolute;
  background: #b0fff0;
}

.handle.top {
  left: 233px;
  top: 1px;
  width: 11px;
  height: 8px;
}

.handle.side {
  right: 2px;
  top: 25px;
  width: 7px;
  height: 8px;
}

.lanes .highlight {
  left: 348px;
  top: 354px;
  width: 497px;
  height: 261px;
}

.vscroll {
  display: flex;
  flex-direction: column;
  justify-content: space-between;
  align-items: center;
  width: 22px;
  padding: 6px 0;
  background: #202224;
  color: #6c6e70;
}

.hscroll {
  display: flex;
  align-items: center;
  gap: 8px;
  height: 22px;
  padding: 0 3px 0 9px;
  background: #27282c;
  color: #6c6e70;
}

.thumb {
  width: 109px;
  height: 6px;
  margin-left: 328px;
  background: #6c6d70;
}

.hscroll .zoom-out {
  margin-left: 7px;
}

.hscroll svg:last-child {
  margin-left: 3px;
}

.zoom {
  appearance: none;
  width: 82px;
  margin: 0 -2px;
  height: 14px;
  background: linear-gradient(#5f6163, #5f6163) 0 6px / 100% 2px no-repeat;
}

.zoom::-webkit-slider-thumb {
  appearance: none;
  width: 5px;
  height: 14px;
  background: #77797b;
}

.playhead {
  position: absolute;
  left: 579px;
  top: 0;
  bottom: 22px;
  width: 1px;
  background: #b9b9b9;
}

.pointer {
  position: absolute;
  left: 1158px;
  top: 419px;
}

/* transport */
.transport {
  display: flex;
  height: 61px;
  background: #5f656d;
  border-bottom: 2px solid #1a1a1b;
}

.deck {
  display: grid;
  grid-template-columns: 44px 98px 54px 100px 188px 32px 32px 46px 16px 44px 50px 42px 42px 62px 160px 62px 26px 40px 82px 74px 36px 80px 1fr;
  flex: 1;
  height: 52px;
  padding: 0 0 0 84px;
  background: #151515;
  clip-path: polygon(18px 0, 100% 0, calc(100% - 15px) 100%, 30px 100%);
  align-items: center;
}

.cell {
  display: flex;
  flex-direction: column;
  align-items: center;
  justify-content: space-between;
  height: 40px;
  font-size: 16px;
  color: #dcdcdc;
  line-height: 20px;
}

.cell small {
  display: flex;
  align-items: center;
  font-size: 14px;
  line-height: 18px;
  color: #8f8f8f;
  white-space: nowrap;
}

.perf {
  padding: 4px 0 0 2px;
}

.cell.left {
  align-items: flex-start;
  padding-left: 4px;
}

.cell:nth-child(3) {
  justify-content: center;
}

.clock strong {
  padding-left: 2px;
  color: #c9c9c9;
  font-size: 24px;
}

.clock small {
  padding-left: 83px;
}

.deck button {
  fill: #c3c3c3;
}

.locators {
  display: grid;
  grid-template-columns: 17px 1fr;
  padding-left: 13px;
  font-size: 16px;
  line-height: 19px;
  color: #d5d5d5;
}

.locators b {
  color: #4a7da6;
  font-size: 14px;
}

.icons {
  height: 34px;
  padding: 1px 0 0;
}

.click {
  display: flex;
  gap: 12px;
  padding-top: 4px;
  color: #8d8d8d;
}

.meters {
  display: grid;
  gap: 10px;
  padding-left: 6px;
}

.views {
  display: flex;
  padding-left: 13px;
  color: #d5d7d9;
  font-size: 16px;
}

.views button {
  width: 70px;
  border-left: 2px solid #50555c;
}

.views button:last-child {
  width: 82px;
}
```
FILE: script.js
```js
// song position to pixels: bar 46 sits 47px from the left edge
const BEAT = 22.06;
const FIRST_BAR = 46;
const BAR_X = 47;
const LOOP_END = 304;

let ticks = `<path d="M0 0h${LOOP_END}v8H0z" fill="#6a6d73"/><path d="M0 8h${LOOP_END}v30H0z" fill="#383c43"/>
<path d="M${LOOP_END - 13} 8h13v15z" fill="#6a6d73"/>`;
let grid = `<rect width="${LOOP_END}" height="100%" fill="#00000026"/>`;

for (let i = -2; i < 60; i++) {
  const x = Math.round(BAR_X + i * BEAT);
  const bar = i % 4 === 0;
  ticks += `<rect x="${x}" y="${bar ? 29 : 35}" width="2" height="${bar ? 10 : 4}" fill="#c9c9c9"/>`;
  if (bar) ticks += `<text x="${x + 1}" y="23" font-size="14" fill="#c6c8ca">${FIRST_BAR + i / 4}</text>`;
  grid += `<rect x="${x}" width="2" height="100%" fill="${bar ? '#393b3e' : '#2c2e30'}"/>`;
}

document.getElementById('ruler').innerHTML = ticks;
document.getElementById('marker-grid').innerHTML = grid;
document.getElementById('lane-grid').innerHTML = grid;

const tracks = [
  { name: 'Inst', input: 'Input L+R', layer: 'Inst 1', io: 'stereo', cls: 'blue' },
  { name: 'Vox1', input: 'Input L', layer: 'Vox1 1', io: 'mono', cls: '' },
  { name: 'Vox2', input: 'Input L', layer: 'Vox2 1', io: 'mono', cls: '' },
  { name: 'Vox3', input: 'Input L', layer: 'Vox3 1', io: 'mono', cls: 'green' },
  { name: 'Vox3 2', input: 'Input L', layer: 'Vox3 2.1', io: 'mono', cls: 'selected' }
];

const icon = (id, w, h, cls = '') => `<svg class="${cls}" width="${w}" height="${h}"><use href="#i-${id}"/></svg>`;
const arrow = icon('down', 10, 7, 'drop-mark');

document.getElementById('tracks').innerHTML = tracks.map((t, i) => `
  <div class="track ${t.cls}">
    <div class="track-color">${icon('auto', 10, 8)}</div>
    <div class="track-no">${i + 1}</div>
    <div class="track-body">
      <div class="track-top">
        <div class="msr">
          <button>M</button><button>S</button>
          <button aria-label="Record">${icon('rec', 12, 12)}</button>
          <button aria-label="Monitor">${icon('mon', 12, 12)}</button>
        </div>
        <span class="track-name">${t.name}</span>
        ${icon('wave', 20, 16)}
      </div>
      <input type="range" class="volume" value="76" aria-label="${t.name} volume">
      <div class="routes">
        <div class="select"><select aria-label="Input"><option>${t.input}</option></select>${arrow}</div>
        <button aria-label="Channel format">${icon(t.io, 20, 12)}</button>
        <div class="select wide"><select aria-label="Instrument"><option>None</option></select>${icon('inst', 10, 10, 'lead')}${arrow}</div>
        <div class="select wide"><select aria-label="Layer"><option>${t.layer}</option></select>${icon('layer', 11, 10, 'lead')}${arrow}</div>
      </div>
    </div>
  </div>`).join('');
```
